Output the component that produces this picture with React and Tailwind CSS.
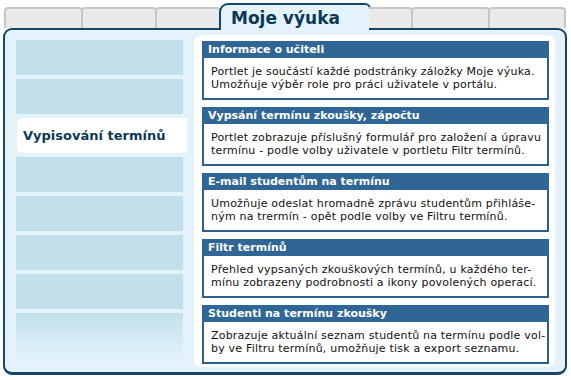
import React from "react";

const portlets = [
  {
    title: "Informace o učiteli",
    lines: ["Portlet je součástí každé podstránky záložky Moje výuka.", "Umožňuje výběr role pro práci uživatele v portálu."],
  },
  {
    title: "Vypsání termínu zkoušky, zápočtu",
    lines: ["Portlet zobrazuje příslušný formulář pro založení a úpravu", "termínu - podle volby uživatele v portletu Filtr termínů."],
  },
  {
    title: "E-mail studentům na termínu",
    lines: ["Umožňuje odeslat hromadně zprávu studentům přihláše-", "ným na trermín - opět podle volby ve Filtru termínů."],
  },
  {
    title: "Filtr termínů",
    lines: ["Přehled vypsaných zkouškových termínů, u každého ter-", "mínu zobrazeny podrobnosti a ikony povolených operací."],
  },
  {
    title: "Studenti na termínu zkoušky",
    lines: ["Zobrazuje aktuální seznam studentů na termínu podle vol-", "by ve Filtru termínů, umožňuje tisk a export seznamu."],
  },
];

function Tab({ w }) {
  return (
    <div
      className={`${w} h-[21px] bg-[#e9e9e9] border-2 border-b-0 border-[#c6c6c6] rounded-t-[4px] -ml-[2px] first:ml-0`}
    />
  );
}

export default function App() {
  return (
    <div
      className="w-[571px] h-[380px] bg-white relative overflow-hidden"
      style={{ fontFamily: '"DejaVu Sans", Verdana, sans-serif' }}
    >
      {/* tabs */}
      <div className="flex items-end h-[28px] pl-[4px] relative z-10">
        <Tab w="w-[79px]" />
        <Tab w="w-[76px]" />
        <Tab w="w-[66px]" />
        <div className="w-[152px] h-[27px] -ml-[2px] mb-[-2px] bg-[#e4f3fb] border-2 border-b-0 border-[#174567] rounded-tl-[9px] rounded-tr-[6px] flex items-center pl-[10px] pt-[1px]">
          <span className="text-[17px] font-bold text-[#0d3856] leading-none">Moje výuka</span>
        </div>
        <div className="w-[44px] h-[21px] -ml-[2px] bg-[#e9e9e9] border-2 border-b-0 border-l-0 border-[#c6c6c6] rounded-tr-[4px]" />
        <Tab w="w-[79px]" />
        <Tab w="w-[78px]" />
      </div>

      {/* main panel */}
      <div className="ml-[3px] w-[564px] h-[347px] border-2 border-[#174567] border-b-[3px] rounded-[9px] bg-[#e4f3fb] flex pt-[10px] pl-[11px]">
        {/* left column */}
        <div className="w-[178px] flex flex-col gap-[4px]">
          <div className="w-[167px] h-[35px] bg-[#c1e0ec]" />
          <div className="w-[167px] h-[35px] bg-[#c1e0ec]" />
          <div className="ml-[1px] w-[170px] h-[35px] bg-white rounded-l-[6px] flex items-center pl-[6px]">
            <span className="text-[13px] font-bold text-[#0d3856]">Vypisování termínů</span>
          </div>
          <div className="w-[167px] h-[35px] bg-[#c1e0ec]" />
          <div className="w-[167px] h-[35px] bg-[#c1e0ec]" />
          <div className="w-[167px] h-[35px] bg-[#c1e0ec]" />
          <div className="w-[167px] h-[35px] bg-[#c1e0ec]" />
          <div className="w-[167px] h-[48px] bg-gradient-to-b from-[#c1e0ec] to-[#e4f3fb]" />
        </div>

        {/* right panel */}
        <div className="mt-[-5px] w-[361px] h-[332px] bg-white rounded-[8px] pt-[6px] pl-[8px] flex flex-col gap-[7px]">
          {portlets.map((p) => (
            <div key={p.title} className="w-[347px] h-[59px] border-2 border-t-0 border-[#2c5f8c] bg-white flex flex-col">
              <div className="h-[17px] bg-[#2f6696] text-white font-bold text-[11px] leading-[17px] -mx-[2px] px-[6px]">
                {p.title}
              </div>
              <div className="pt-[7px] pl-[7px] text-[11px] leading-[13px] tracking-[0.2px] text-[#111]">
                {p.lines.map((l) => (
                  <div key={l} className="whitespace-nowrap">{l}</div>
                ))}
              </div>
            </div>
          ))}
        </div>
      </div>
    </div>
  );
}
